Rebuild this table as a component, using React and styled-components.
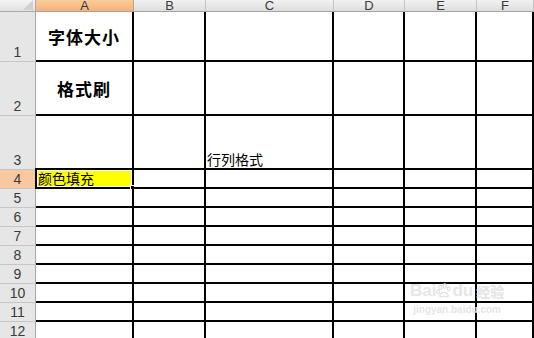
import React from 'react'
import styled, { createGlobalStyle } from 'styled-components'

const Global = createGlobalStyle`
    html, body {
        margin: 0;
        padding: 0;
        background: #fff;
        overflow: hidden;
    }
`;

const COLS = ['A', 'B', 'C', 'D', 'E', 'F'];
const ROW_HEIGHTS = [50, 54, 54, 19, 19, 19, 19, 19, 19, 19, 19, 19];

const Sheet = styled.div`
    position: relative;
    width: 534px;
    height: 338px;
    overflow: hidden;
    display: grid;
    grid-template-columns: 36px 98px 72px 128px 71px 72px 1fr;
    grid-template-rows: 12px ${ROW_HEIGHTS.map((h) => h + 'px').join(' ')};
    font-family: "Noto Sans CJK SC", "Liberation Sans", sans-serif;
`;

const Corner = styled.div`
    position: relative;
    box-sizing: border-box;
    background: linear-gradient(#f3f3f3, #e2e2e2);
    border-right: 1px solid #a9a9a9;
    border-bottom: 1px solid #a9a9a9;
    &::after {
        content: '';
        position: absolute;
        right: 2px;
        bottom: 1px;
        width: 0;
        height: 0;
        border-left: 10px solid transparent;
        border-bottom: 10px solid #cfcfcf;
    }
`;

const ColHead = styled.div`
    box-sizing: border-box;
    display: flex;
    align-items: flex-start;
    justify-content: center;
    background: ${(p) => (p.$active ? 'linear-gradient(#f9cc9a, #f6b27a)' : 'linear-gradient(#f1f1f1, #dedede)')};
    border-right: 1px solid ${(p) => (p.$active ? '#c8a27c' : '#c4c4c4')};
    border-bottom: 1px solid #a4a4a4;
    color: #3a3a3a;
    font-family: "Liberation Sans", sans-serif;
    font-size: 13px;
    line-height: 11px;
`;

const RowHead = styled.div`
    box-sizing: border-box;
    display: flex;
    align-items: flex-end;
    justify-content: center;
    background: ${(p) => (p.$active ? '#f8c9a0' : '#e6e6e6')};
    border-right: 1px solid #a9a9a9;
    border-bottom: 1px solid #c6c6c6;
    color: #3a3a3a;
    font-family: "Liberation Sans", sans-serif;
    font-size: 14px;
    line-height: 17px;
`;

const Cell = styled.div`
    position: relative;
    box-sizing: border-box;
    border-right: 2px solid #000;
    border-bottom: 2px solid #000;
    background: ${(p) => p.$fill || '#fff'};
    display: flex;
    align-items: ${(p) => (p.$middle ? 'center' : 'flex-end')};
    justify-content: ${(p) => (p.$center ? 'center' : 'flex-start')};
    white-space: nowrap;
    color: #000;
`;

const Title = styled.span`
    font-size: 17px;
    font-weight: 700;
    letter-spacing: 1px;
`;

const Plain = styled.span`
    font-size: 14px;
    line-height: 17px;
    padding-left: ${(p) => p.$indent || 1}px;
`;

const Selection = styled.div`
    position: absolute;
    left: -1px;
    top: -2px;
    right: -2px;
    bottom: -2px;
    border: 2px solid #000;
    pointer-events: none;
    &::before {
        content: '';
        position: absolute;
        inset: 0;
        border: 1px solid #fff;
    }
    &::after {
        content: '';
        position: absolute;
        right: -4px;
        bottom: -4px;
        width: 4px;
        height: 4px;
        background: #000;
        border: 1px solid #fff;
    }
`;

const Watermark = styled.div`
    position: absolute;
    left: 410px;
    top: 282px;
    display: flex;
    flex-direction: column;
    align-items: center;
    white-space: nowrap;
    color: #e6e6e6;
    pointer-events: none;
`;

const MarkTop = styled.div`
    display: flex;
    align-items: flex-end;
    font-family: "Liberation Sans", sans-serif;
    font-size: 17px;
    font-weight: 700;
    line-height: 18px;
    & > * {
        flex-shrink: 0;
    }
    & > b {
        font-family: "Noto Sans CJK SC", sans-serif;
        font-size: 14px;
        line-height: 17px;
        margin-left: 3px;
    }
`;

const MarkUrl = styled.div`
    font-family: "Liberation Sans", sans-serif;
    font-size: 10px;
    font-weight: 700;
    margin-top: 4px;
`;

const cellContent = {
    '1-A': { node: <Title>字体大小</Title>, middle: true, center: true },
    '2-A': { node: <Title>格式刷</Title>, middle: true, center: true },
    '3-C': { node: <Plain>行列格式</Plain> },
    '4-A': { node: <Plain $indent={2}>颜色填充</Plain>, fill: '#ffff00', selected: true },
};

function Paw() {
    return (
        <svg width="16" height="18" viewBox="0 0 22 22">
            <g fill="none" stroke="#dedede" strokeWidth="1.6">
                <ellipse cx="6" cy="6" rx="2.2" ry="3" />
                <ellipse cx="12" cy="4" rx="2.2" ry="3" />
                <ellipse cx="17.5" cy="8" rx="2" ry="2.6" />
                <ellipse cx="3" cy="12" rx="2" ry="2.6" />
                <path d="M6 19c-2-1 0-6 5-6s7 5 5 6-3-1-5-1-3 2-5 1z" />
            </g>
        </svg>
    );
}

export default function App() {
    return (
        <>
            <Global />
            <Sheet>
                <Corner />
                {COLS.map((c) => (
                    <ColHead key={c} $active={c === 'A'}>
                        <span>{c}</span>
                    </ColHead>
                ))}
                {ROW_HEIGHTS.map((h, i) => {
                    const r = i + 1;
                    return (
                        <React.Fragment key={r}>
                            <RowHead $active={r === 4}>{r}</RowHead>
                            {COLS.map((c) => {
                                const info = cellContent[`${r}-${c}`] || {};
                                return (
                                    <Cell key={c} $fill={info.fill} $middle={info.middle} $center={info.center}>
                                        {info.node}
                                        {info.selected && <Selection />}
                                    </Cell>
                                );
                            })}
                        </React.Fragment>
                    );
                })}
                <Watermark>
                    <MarkTop>
                        <span>Bai</span>
                        <Paw />
                        <span>du</span>
                        <b>经验</b>
                    </MarkTop>
                    <MarkUrl>jingyan.baidu.com</MarkUrl>
                </Watermark>
            </Sheet>
        </>
    );
}
